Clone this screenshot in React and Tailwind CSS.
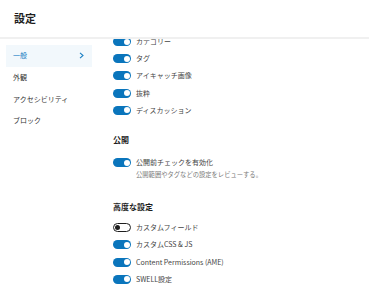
import React from "react";

const font = { fontFamily: '"Noto Sans CJK JP", "Noto Sans", sans-serif' };

function Toggle({ on }) {
  if (!on) {
    return (
      <span className="relative block w-[18px] h-[9px] shrink-0 rounded-full border border-[#1e1e1e] bg-white">
        <span className="absolute left-[1px] top-[1px] w-[5px] h-[5px] rounded-full bg-[#1e1e1e]" />
      </span>
    );
  }
  return (
    <span className="relative block w-[18px] h-[9px] shrink-0 rounded-full bg-[#0a75bc]">
      <span className="absolute right-[1.5px] top-[1.5px] w-[6px] h-[6px] rounded-full bg-white" />
    </span>
  );
}

function Row({ label, on = true }) {
  return (
    <div className="flex items-center gap-[5px] h-[17.2px]">
      <Toggle on={on} />
      <span className="text-[7px] leading-none text-[#444]">{label}</span>
    </div>
  );
}

const menu = ["一般", "外観", "アクセシビリティ", "ブロック"];

export default function App() {
  return (
    <div className="w-[369px] h-[299px] bg-white overflow-hidden flex flex-col" style={font}>
      <header className="h-[39px] shrink-0 border-b-2 border-[#f0f0f0] flex items-center px-[14px]">
        <h1 className="text-[11px] font-semibold text-[#1e1e1e] leading-none">設定</h1>
      </header>
      <div className="flex flex-1 min-h-0">
        <nav className="w-[98px] shrink-0 px-[6px] pt-[6px]">
          {menu.map((m, i) => (
            <div
              key={m}
              className={
                "h-[21.7px] flex items-center justify-between pl-[7px] pr-[8px] text-[7px] leading-none " +
                (i === 0 ? "bg-[#f2f8fc] text-[#1a7fc4]" : "text-[#333]")
              }
            >
              <span>{m}</span>
              {i === 0 && (
                <svg width="5" height="7" viewBox="0 0 5 7" fill="none">
                  <path d="M1 0.8 L4 3.5 L1 6.2" stroke="#1a7fc4" strokeWidth="1.1" />
                </svg>
              )}
            </div>
          ))}
        </nav>
        <main className="flex-1 overflow-hidden pl-[15px]">
          <div className="-mt-[6px]">
            <Row label="カテゴリー" />
            <Row label="タグ" />
            <Row label="アイキャッチ画像" />
            <Row label="抜粋" />
            <Row label="ディスカッション" />

            <h2 className="mt-[15px] h-[12px] flex items-center text-[8px] font-bold text-[#1e1e1e] leading-none">公開</h2>
            <div className="mt-[8px]">
              <Row label="公開前チェックを有効化" />
            </div>
            <p className="pl-[23px] text-[6.3px] leading-[8px] text-[#7a7a7a]">公開範囲やタグなどの設定をレビューする。</p>

            <h2 className="mt-[22px] h-[12px] flex items-center text-[8px] font-bold text-[#1e1e1e] leading-none">高度な設定</h2>
            <div className="mt-[6px]">
              <Row label="カスタムフィールド" on={false} />
              <Row label="カスタムCSS & JS" />
              <Row label="Content Permissions (AME)" />
              <Row label="SWELL設定" />
            </div>
          </div>
        </main>
      </div>
    </div>
  );
}
